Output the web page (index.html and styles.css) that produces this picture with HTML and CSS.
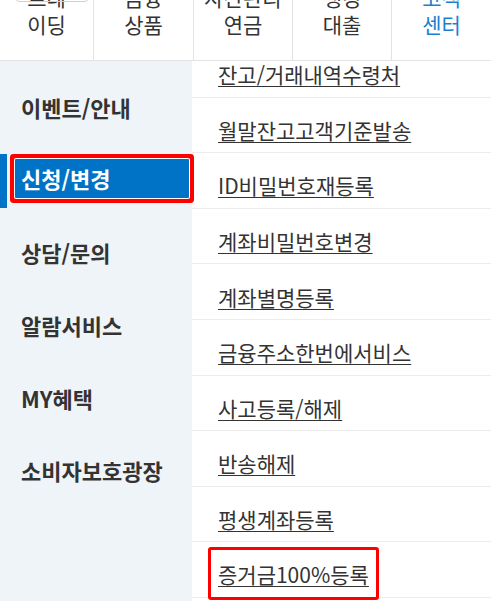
FILE: index.html
```html
<!DOCTYPE html>
<html lang="ko">
<head>
<meta charset="utf-8">
<title>고객센터</title>
<link rel="stylesheet" href="styles.css">
</head>
<body>
<div class="tabs">
  <div class="tab"><span class="badge"></span>트레<br>이딩</div>
  <div class="tab">금융<br>상품</div>
  <div class="tab">자산관리<br>연금</div>
  <div class="tab">뱅킹<br>대출</div>
  <div class="tab active">고객<br>센터</div>
</div>
<div class="body">
  <nav class="side">
    <div class="side-item"><span class="label">이벤트/안내</span></div>
    <div class="side-item on"><span class="label">신청/변경</span></div>
    <div class="side-item"><span class="label">상담/문의</span></div>
    <div class="side-item"><span class="label">알람서비스</span></div>
    <div class="side-item"><span class="label">MY혜택</span></div>
    <div class="side-item"><span class="label">소비자보호광장</span></div>
  </nav>
  <div class="main">
    <ul class="list">
      <li class="row"><a href="#">잔고/거래내역수령처</a></li>
      <li class="row"><a href="#">월말잔고고객기준발송</a></li>
      <li class="row"><a href="#">ID비밀번호재등록</a></li>
      <li class="row"><a href="#">계좌비밀번호변경</a></li>
      <li class="row"><a href="#">계좌별명등록</a></li>
      <li class="row"><a href="#">금융주소한번에서비스</a></li>
      <li class="row"><a href="#">사고등록/해제</a></li>
      <li class="row"><a href="#">반송해제</a></li>
      <li class="row"><a href="#">평생계좌등록</a></li>
      <li class="row"><a href="#" class="mark">증거금100%등록</a></li>
    </ul>
  </div>
</div>
</body>
</html>
```
FILE: styles.css
```css
* { box-sizing: border-box; }
html, body { margin: 0; padding: 0; background: #fff; }
body {
  width: 491px;
  height: 601px;
  overflow: hidden;
  font-family: "Noto Sans CJK KR", "Noto Sans", sans-serif;
  color: #333;
}
.tabs {
  display: grid;
  grid-template-columns: 93px 100px 99px 99px 1fr;
  margin-top: -26px;
  height: 87px;
  border-bottom: 1px solid #e3e3e3;
  background: #fff;
}
.tab {
  position: relative;
  padding-top: 10px;
  text-align: center;
  font-size: 21px;
  line-height: 27px;
  color: #333;
}
.tab + .tab { border-left: 1px solid #e3e3e3; }
.tab.active { color: #1a7fd0; }
.badge {
  position: absolute;
  left: 14px;
  right: 3px;
  top: 4px;
  height: 24px;
  border: 1px solid #cfcfcf;
  border-radius: 6px;
}
.body {
  display: flex;
  height: 540px;
  overflow: hidden;
}
.side {
  width: 192px;
  flex: none;
  background: #eff4f8;
  padding-top: 10px;
}
.side-item {
  position: relative;
  height: 72.6px;
  display: flex;
  align-items: center;
  font-size: 22px;
  font-weight: 700;
}
.side-item .label { padding-left: 21px; }
.side-item.on::before {
  content: "";
  position: absolute;
  left: 0;
  top: 10px;
  width: 7px;
  height: 54px;
  background: #0073c6;
}
.side-item.on .label {
  margin-left: 15px;
  padding-left: 6px;
  width: 174px;
  height: 39px;
  display: flex;
  align-items: center;
  background: #0073c6;
  color: #fff;
  border-radius: 1px;
  box-shadow: 0 0 0 1px #fff, 0 0 0 5px #f00;
  margin-top: -3px;
}
.main {
  flex: 1;
  min-width: 0;
  position: relative;
  z-index: 1;
}
.list {
  list-style: none;
  margin: -19px 0 0;
  padding: 0;
}
.row {
  height: 55.6px;
  border-bottom: 1px solid #ececec;
  padding: 10px 0 0 26px;
  display: flex;
  align-items: center;
  font-size: 21px;
}
.row a {
  color: #333;
  text-decoration: underline;
  text-underline-offset: 3px;
  text-decoration-thickness: 1px;
}
.row a.mark {
  margin-left: -10px;
  margin-top: -8px;
  padding: 0 7px;
  height: 53px;
  display: inline-flex;
  align-items: center;
  border: 3px solid #f00;
  border-radius: 3px;
  position: relative;
  top: 3px;
}
```
